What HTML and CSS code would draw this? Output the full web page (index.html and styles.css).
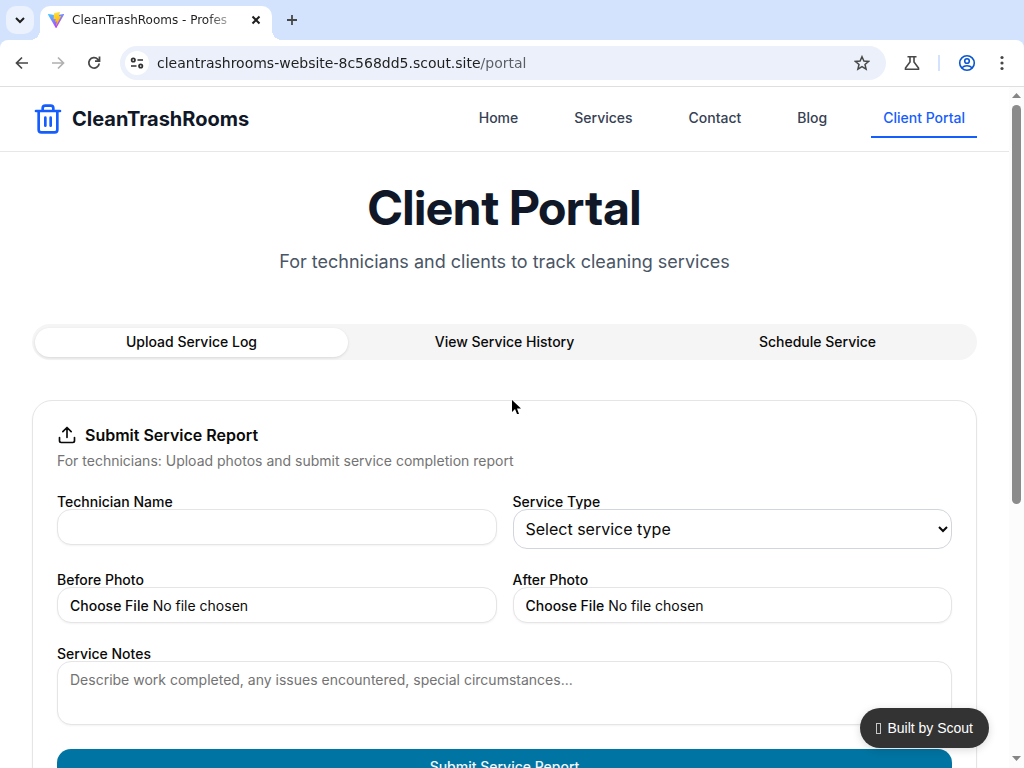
FILE: index.html
```html
<!DOCTYPE html>
<html lang="en">
<head>
<meta charset="utf-8">
<title>CleanTrashRooms - Client Portal</title>
<link rel="stylesheet" href="styles.css">
</head>
<body>
<div class="browser">
  <div class="tabstrip">
    <button class="tab-search" aria-label="Search tabs">
      <svg width="12" height="12" viewBox="0 0 12 12" fill="none" stroke="#1f1f1f" stroke-width="2"><path d="M2 4l4 4 4-4"/></svg>
    </button>
    <div class="browser-tab">
      <svg class="favicon" width="16" height="16" viewBox="0 0 32 32">
        <defs>
          <linearGradient id="shield" x1="0" y1="0" x2="0.6" y2="1"><stop offset="0" stop-color="#41d1ff"/><stop offset="1" stop-color="#bd34fe"/></linearGradient>
          <linearGradient id="bolt" x1="0.4" y1="0" x2="0.6" y2="1"><stop offset="0" stop-color="#ffea83"/><stop offset="0.1" stop-color="#ffdd35"/><stop offset="1" stop-color="#ffa800"/></linearGradient>
        </defs>
        <path fill="url(#shield)" d="M31.900 5.300 17 31.700a1 1 0 0 1-1.700 0L.1 5.300a1 1 0 0 1 1-1.500L16 6.500l14.800-2.700a1 1 0 0 1 1.100 1.500z"/>
        <path fill="url(#bolt)" d="M23.200 0 12.200 2.200a.5.500 0 0 0-.3.400l-.7 11.500a.5.500 0 0 0 .5.500l3.100-.7a.5.500 0 0 1 .6.600l-.9 4.500a.5.500 0 0 0 .6.500l1.900-.6a.5.500 0 0 1 .6.600l-1.500 7.100c0 .4.500.7.800.300L26 8.500a.5.500 0 0 0-.5-.7l-3.200.6a.5.500 0 0 1-.5-.6l2-7.200a.5.500 0 0 0-.6-.6z"/>
      </svg>
      <span class="tab-title">CleanTrashRooms - Profes</span>
      <button class="icon-button" aria-label="Close tab">
        <svg width="16" height="16" viewBox="0 0 16 16" stroke="#1f1f1f" stroke-width="2"><path d="M4.500 4.500l7 7M11.500 4.500l-7 7"/></svg>
      </button>
    </div>
    <button class="icon-button new-tab" aria-label="New tab">
      <svg width="16" height="16" viewBox="0 0 16 16" stroke="#474747" stroke-width="1.800"><path d="M8 3v10M3 8h10"/></svg>
    </button>
  </div>
  <div class="toolbar">
    <div class="history">
      <button class="icon-button" aria-label="Back"><svg width="16" height="16" viewBox="0 0 16 16" fill="none" stroke="#474747" stroke-width="1.700"><path d="M14 8H3M8 2.500L2.500 8 8 13.500"/></svg></button>
      <button class="icon-button" aria-label="Forward" disabled><svg width="16" height="16" viewBox="0 0 16 16" fill="none" stroke="#b0b0b0" stroke-width="1.700"><path d="M2 8h11M8 2.500L13.500 8 8 13.500"/></svg></button>
      <button class="icon-button" aria-label="Reload"><svg width="16" height="16" viewBox="0 0 16 16" fill="none" stroke="#474747" stroke-width="1.800"><path d="M13.200 8.500A5.200 5.200 0 1 1 11.800 4.300L13.500 6M13.500 1.500V6.200H9"/></svg></button>
    </div>
    <div class="omnibox">
      <button class="site-info" aria-label="View site information">
        <svg width="16" height="16" viewBox="0 0 16 16" fill="none" stroke="#303030" stroke-width="1.700"><circle cx="4.300" cy="5" r="1.700"/><path d="M8.500 5H14M2 11h5.500"/><circle cx="11.700" cy="11" r="1.700"/></svg>
      </button>
      <input class="url" type="text" aria-label="Address" value="cleantrashrooms-website-8c568dd5.scout.site/portal">
      <button class="icon-button" aria-label="Bookmark this tab">
        <svg width="16" height="16" viewBox="0 0 16 16" fill="none" stroke="#474747" stroke-width="1.500"><path d="M8 1.700l1.900 4.300 4.700.4-3.600 3.100 1.100 4.600L8 11.700l-4.100 2.400L5 9.500 1.400 6.400l4.700-.4z"/></svg>
      </button>
    </div>
    <div class="tools">
      <button class="icon-button" aria-label="Experiments"><svg width="16" height="16" viewBox="0 0 16 16" fill="none" stroke="#474747" stroke-width="1.600"><path d="M3.500 1.800h9M6 2v5L1.500 13v1.200h13V13L10 7V2"/></svg></button>
      <span class="divider"></span>
      <button class="icon-button" aria-label="Profile"><svg width="18" height="18" viewBox="0 0 18 18" fill="none" stroke="#0b57d0" stroke-width="1.600"><circle cx="9" cy="9" r="7.300"/><circle cx="9" cy="7" r="2.300"/><path d="M4 13.800c2.500-2.800 7.500-2.800 10 0"/></svg></button>
      <button class="icon-button" aria-label="Menu"><svg width="16" height="16" viewBox="0 0 16 16" fill="#474747"><circle cx="8" cy="2.500" r="1.600"/><circle cx="8" cy="8" r="1.600"/><circle cx="8" cy="13.500" r="1.600"/></svg></button>
    </div>
  </div>
</div>

<div class="viewport">
  <div class="page">
    <header class="site-header">
      <a class="brand" href="#">
        <svg width="32" height="32" viewBox="0 0 24 24" fill="none" stroke="currentColor" stroke-width="2" stroke-linecap="round" stroke-linejoin="round"><path d="M3 6h18M19 6v14a2 2 0 0 1-2 2H7a2 2 0 0 1-2-2V6M8 6V4a2 2 0 0 1 2-2h4a2 2 0 0 1 2 2v2M10 11v6M14 11v6"/></svg>
        <span class="brand-name">CleanTrashRooms</span>
      </a>
      <nav class="site-nav">
        <a class="nav-link" href="#">Home</a>
        <a class="nav-link" href="#">Services</a>
        <a class="nav-link" href="#">Contact</a>
        <a class="nav-link" href="#">Blog</a>
        <a class="nav-link active" href="#">Client Portal</a>
      </nav>
    </header>
    <main class="main">
      <div class="intro">
        <h1 class="title">Client Portal</h1>
        <p class="subtitle">For technicians and clients to track cleaning services</p>
      </div>
      <div class="tabs" role="tablist">
        <button class="tab selected" role="tab" aria-selected="true">Upload Service Log</button>
        <button class="tab" role="tab" aria-selected="false">View Service History</button>
        <button class="tab" role="tab" aria-selected="false">Schedule Service</button>
      </div>
      <section class="card">
        <div class="card-header">
          <h2 class="card-title">
            <svg width="20" height="20" viewBox="0 0 24 24" fill="none" stroke="currentColor" stroke-width="2" stroke-linecap="round" stroke-linejoin="round"><path d="M12 3v12M17 8l-5-5-5 5M21 15v4a2 2 0 0 1-2 2H5a2 2 0 0 1-2-2v-4"/></svg>
            Submit Service Report
          </h2>
          <p class="card-text">For technicians: Upload photos and submit service completion report</p>
        </div>
        <form class="form">
          <div class="row">
            <div class="field"><label class="label" for="name">Technician Name</label><input class="control" id="name" type="text"></div>
            <div class="field"><label class="label" for="type">Service Type</label><select class="select" id="type"><option>Select service type</option></select></div>
          </div>
          <div class="row">
            <div class="field"><label class="label" for="before">Before Photo</label><input class="control" id="before" type="file"></div>
            <div class="field"><label class="label" for="after">After Photo</label><input class="control" id="after" type="file"></div>
          </div>
          <div class="field"><label class="label" for="notes">Service Notes</label><textarea class="control notes" id="notes" placeholder="Describe work completed, any issues encountered, special circumstances..."></textarea></div>
          <button class="submit" type="button">Submit Service Report</button>
        </form>
      </section>
    </main>
  </div>
  <div class="scrollbar">
    <svg width="9" height="5" viewBox="0 0 9 5" fill="#858585"><path d="M4.500 0L9 5H0z"/></svg>
    <div class="track"><div class="thumb"></div></div>
    <svg width="9" height="5" viewBox="0 0 9 5" fill="#858585"><path d="M0 0h9L4.500 5z"/></svg>
  </div>
  <a class="badge" href="#"><span class="badge-mark"></span>Built by Scout</a>
  <svg class="cursor" width="10" height="16" viewBox="0 0 10 16"><path d="M0 0v12l3-3 2 5h2L5 8.500h4z"/></svg>
</div>
</body>
</html>
```
FILE: styles.css
```css
* { box-sizing: border-box; }
body {
  margin: 0;
  height: 100vh;
  display: flex;
  flex-direction: column;
  overflow: hidden;
  background: #fff;
  color: #0a0a0a;
  font-family: Inter, "Liberation Sans", sans-serif;
  font-size: 14px;
}
button { border: 0; padding: 0; background: none; font: inherit; color: inherit; }
svg { display: block; flex: none; }
a { text-decoration: none; }

/* Browser frame */
.browser { flex: none; background: #d3e3fd; font-family: "DejaVu Sans", sans-serif; color: #1f1f1f; }
.tabstrip { display: flex; align-items: center; height: 40px; padding-left: 6px; }
.tab-search { width: 28px; height: 28px; border-radius: 10px; background: #ebf1fd; display: grid; place-items: center; }
.browser-tab {
  position: relative;
  align-self: flex-end;
  display: flex;
  align-items: center;
  gap: 8px;
  width: 232px;
  height: 34px;
  margin-left: 6px;
  padding: 0 8px 6px;
  border-radius: 10px 10px 0 0;
  background: #fff;
}
.browser-tab::before, .browser-tab::after { content: ""; position: absolute; bottom: 0; width: 10px; height: 10px; }
.browser-tab::before { right: 100%; background: radial-gradient(circle at 0 0, transparent 10px, #fff 10px); }
.browser-tab::after { left: 100%; background: radial-gradient(circle at 100% 0, transparent 10px, #fff 10px); }
.tab-title {
  flex: 1;
  overflow: hidden;
  white-space: nowrap;
  font-size: 12px;
  mask-image: linear-gradient(to right, #000 80%, transparent);
}
.icon-button { display: grid; place-items: center; }
.new-tab { margin-left: 12px; }
.toolbar {
  display: flex;
  align-items: center;
  gap: 18px;
  height: 47px;
  padding: 0 14px;
  border-bottom: 1px solid #dfdfdf;
  border-radius: 8px 8px 0 0;
  background: #fff;
}
.history { display: flex; gap: 20px; }
.omnibox { flex: 1; display: flex; align-items: center; height: 34px; padding: 0 16px 0 5px; border-radius: 17px; background: #ebf0fa; }
.site-info { width: 24px; height: 24px; border-radius: 50%; background: #fff; display: grid; place-items: center; }
.url {
  flex: 1;
  min-width: 0;
  border: 0;
  padding: 0 8px;
  font-family: "DejaVu Sans", sans-serif;
  font-size: 14px;
  color: transparent;
  background: linear-gradient(to right, #1f1f1f 332px, #5a5d63 332px);
  background-clip: text;
}
.tools { display: flex; align-items: center; gap: 18px; }
.divider { width: 2px; height: 16px; background: #d3e3fd; }

/* Page area */
.viewport { position: relative; flex: 1; min-height: 0; display: flex; }
.page { flex: 1; min-width: 0; overflow: hidden; }
.scrollbar { flex: none; width: 15px; background: #fcfcfc; display: flex; flex-direction: column; align-items: center; gap: 7px; padding: 6px 0 7px; }
.track { flex: 1; width: 9px; }
.thumb { height: 62%; border-radius: 5px; background: #8b8b8b; }

.site-header { display: flex; align-items: center; justify-content: space-between; height: 65px; padding: 0 32px; border-bottom: 1px solid #e5e7eb; }
.brand { display: flex; align-items: center; gap: 8px; color: #155dfc; }
.brand-name, .subtitle { font-family: "Inter Variable", Inter, "Liberation Sans", sans-serif; }
.brand-name { font-size: 20px; font-weight: 700; color: #101828; }
.site-nav { display: flex; gap: 32px; }
.nav-link { padding: 8px 12px; border-bottom: 2px solid transparent; line-height: 20px; font-weight: 500; color: #364153; }
.nav-link.active { color: #155dfc; border-color: #155dfc; }

.main { padding: 32px 32px 0; }
.intro { text-align: center; }
.title { margin: 0; font-family: "Inter Display", Inter, "Liberation Sans", sans-serif; font-size: 48px; line-height: 48px; font-weight: 700; color: #101828; }
.subtitle { margin: 16px 0 48px; font-size: 18px; line-height: 28px; color: #4a5565; }
.tabs { display: grid; grid-template-columns: repeat(3, 1fr); height: 36px; padding: 4px 3px 3px; border-radius: 18px; background: #f5f5f5; }
.tab { padding-bottom: 2px; border-radius: 15px; font-weight: 500; }
.tab.selected { background: #fff; box-shadow: 0 1px 3px rgba(0, 0, 0, 0.12); }
.card { margin-top: 40px; padding: 24px; border: 1px solid #e5e5e5; border-radius: 20px; box-shadow: 0 1px 2px rgba(0, 0, 0, 0.06); }
.card-header { display: grid; gap: 6px; margin-bottom: 24px; }
.card-title { display: flex; align-items: center; gap: 8px; margin: 0; font-size: 16px; line-height: 20px; font-weight: 600; }
.card-text { margin: 0; line-height: 20px; color: #737373; }
.form { display: grid; gap: 24px; }
.row { display: grid; grid-template-columns: 1fr 1fr; gap: 16px; align-items: start; }
.field { display: flex; flex-direction: column; min-width: 0; }
.label { line-height: 14px; font-weight: 500; }
.control {
  width: 100%;
  height: 36px;
  padding: 4px 12px;
  border: 1px solid #e5e5e5;
  border-radius: 14px;
  background: #fff;
  box-shadow: 0 1px 2px rgba(0, 0, 0, 0.05);
  color: #0a0a0a;
  font: inherit;
  line-height: 20px;
}
.control::file-selector-button { height: 28px; border: 0; padding: 0; margin: 0 4px 0 0; background: none; font: inherit; font-weight: 500; color: #0a0a0a; }
.select { width: 100%; height: 40px; padding: 0 8px; border: 1px solid #d1d5dc; border-radius: 14px; background: #fff; font: inherit; font-size: 16px; color: #0a0a0a; }
.notes { height: 64px; padding: 8px 12px; resize: vertical; }
.notes::placeholder { color: #737373; }
.submit { height: 36px; padding-bottom: 2px; border-radius: 14px; background: #0074a2; color: #f0f9ff; font-weight: 500; }

.badge {
  position: absolute;
  right: 35px;
  bottom: 20px;
  display: flex;
  align-items: center;
  gap: 6px;
  height: 40px;
  padding: 0 16px;
  border-radius: 20px;
  background: #333;
  box-shadow: 0 2px 8px rgba(0, 0, 0, 0.15);
  color: #fff;
  font-family: "Liberation Sans", sans-serif;
}
.badge-mark { width: 5px; height: 11px; border: 1px solid #c8c8c8; }
.cursor { position: absolute; left: 512px; top: 313px; }
```
